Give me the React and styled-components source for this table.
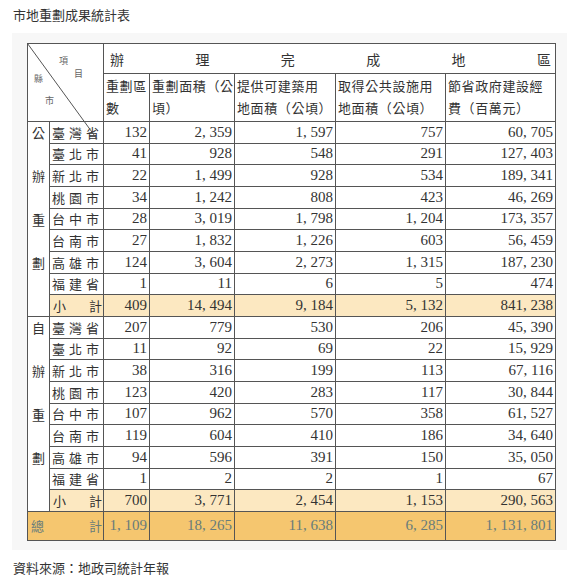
import React from 'react'
import styled, { createGlobalStyle } from 'styled-components'

const GlobalStyle = createGlobalStyle`
  body {
    margin: 0;
    background: #fff;
    font-family: "Noto Sans CJK TC", "Noto Sans", sans-serif;
    color: #333;
  }
`

const sections = [
    {
        label: ['公', '辦', '重', '劃'],
        rows: [
            ['臺灣省', 132, 2359, 1597, 757, 60705],
            ['臺北市', 41, 928, 548, 291, 127403],
            ['新北市', 22, 1499, 928, 534, 189341],
            ['桃園市', 34, 1242, 808, 423, 46269],
            ['台中市', 28, 3019, 1798, 1204, 173357],
            ['台南市', 27, 1832, 1226, 603, 56459],
            ['高雄市', 124, 3604, 2273, 1315, 187230],
            ['福建省', 1, 11, 6, 5, 474],
        ],
        subtotal: [409, 14494, 9184, 5132, 841238],
    },
    {
        label: ['自', '辦', '重', '劃'],
        rows: [
            ['臺灣省', 207, 779, 530, 206, 45390],
            ['臺北市', 11, 92, 69, 22, 15929],
            ['新北市', 38, 316, 199, 113, 67116],
            ['桃園市', 123, 420, 283, 117, 30844],
            ['台中市', 107, 962, 570, 358, 61527],
            ['台南市', 119, 604, 410, 186, 34640],
            ['高雄市', 94, 596, 391, 150, 35050],
            ['福建省', 1, 2, 2, 1, 67],
        ],
        subtotal: [700, 3771, 2454, 1153, 290563],
    },
]

const total = [1109, 18265, 11638, 6285, 1131801]

// 原表的千分位是「逗號 + 空白」
const fmt = (n) => n.toLocaleString('en-US').replace(/,/g, ', ')

const colWidths = [22, 54, 46, 85, 101, 110, 110]

function App() {
    return (
        <>
            <GlobalStyle />
            <Page>
                <Title>市地重劃成果統計表</Title>
                <Panel>
                    <TableWrap>
                        <Table>
                            <colgroup>
                                {colWidths.map((w, i) => <col key={i} style={{ width: w }} />)}
                            </colgroup>
                            <thead>
                                <tr>
                                    <Corner colSpan={2} rowSpan={2}>
                                        <CornerLabel $x={31} $y={12}>項</CornerLabel>
                                        <CornerLabel $x={46} $y={25}>目</CornerLabel>
                                        <CornerLabel $x={6} $y={30}>縣</CornerLabel>
                                        <CornerLabel $x={17} $y={52}>市</CornerLabel>
                                    </Corner>
                                    <SpreadHead colSpan={5}>
                                        <Spread>
                                            {'辦理完成地區'.split('').map((c) => <span key={c}>{c}</span>)}
                                        </Spread>
                                    </SpreadHead>
                                </tr>
                                <tr>
                                    <SubHead>重劃區<br />數</SubHead>
                                    <SubHead>重劃面積（公<br />頃）</SubHead>
                                    <SubHead>提供可建築用<br />地面積（公頃）</SubHead>
                                    <SubHead>取得公共設施用<br />地面積（公頃）</SubHead>
                                    <SubHead>節省政府建設經<br />費（百萬元）</SubHead>
                                </tr>
                            </thead>
                            <tbody>
                                {sections.map((s, si) => (
                                    <React.Fragment key={si}>
                                        {s.rows.map((r, ri) => (
                                            <Row key={ri}>
                                                {ri === 0 && (
                                                    <Group rowSpan={9}>
                                                        <GroupChars>
                                                            {s.label.map((c, ci) => <span key={ci}>{c}</span>)}
                                                        </GroupChars>
                                                    </Group>
                                                )}
                                                <City>{r[0]}</City>
                                                {r.slice(1).map((v, vi) => <Num key={vi}>{fmt(v)}</Num>)}
                                            </Row>
                                        ))}
                                        <Row $tone="sub">
                                            <City>
                                                <Spread><span>小</span><span>計</span></Spread>
                                            </City>
                                            {s.subtotal.map((v, vi) => <Num key={vi}>{fmt(v)}</Num>)}
                                        </Row>
                                    </React.Fragment>
                                ))}
                                <Row $tone="total" $tall>
                                    <City colSpan={2}>
                                        <Spread><span>總</span><span>計</span></Spread>
                                    </City>
                                    {total.map((v, vi) => <Num key={vi}>{fmt(v)}</Num>)}
                                </Row>
                            </tbody>
                        </Table>
                        <Diagonal width="72" height="98" viewBox="0 0 72 98">
                            <line x1="0.5" y1="0.5" x2="70" y2="96" stroke="#555" strokeWidth="1" />
                        </Diagonal>
                    </TableWrap>
                </Panel>
                <Source>資料來源：地政司統計年報</Source>
            </Page>
        </>
    )
}

const Page = styled.div`
  padding: 6px 19px 0 12px;
`

const Title = styled.div`
  font-size: 13px;
  line-height: 18px;
  padding-left: 1px;
  color: #333;
`

const Panel = styled.div`
  margin-top: 9px;
  background: #f7f7f7;
  padding: 10px 12px 9px 15px;
`

const Source = styled.div`
  margin-top: 9px;
  font-size: 13px;
  line-height: 18px;
  padding-left: 1px;
  color: #333;
`

const TableWrap = styled.div`
  position: relative;
  width: 528px;
`

const Table = styled.table`
  width: 528px;
  table-layout: fixed;
  border-collapse: collapse;
  background: #fff;
  border: 1px solid #444;
  font-family: "Liberation Serif", "Noto Sans CJK TC", serif;
  color: #333;

  td, th {
    border: 1px solid #555;
    padding: 0;
    font-weight: normal;
  }
`

const Corner = styled.th`
  position: relative;
  height: 30px;
  vertical-align: top;
`

const CornerLabel = styled.span`
  position: absolute;
  left: ${(p) => p.$x}px;
  top: ${(p) => p.$y}px;
  font-size: 9px;
  line-height: 10px;
  color: #666;
  font-family: "Noto Sans CJK TC", sans-serif;
`

const SpreadHead = styled.th`
  height: 29px;
  padding: 0 2px 0 3px !important;
  font-size: 14px;
`

const Spread = styled.div`
  display: flex;
  justify-content: space-between;
  padding: 0 2px 0 3px;
`

const SubHead = styled.th`
  height: 47px;
  text-align: left;
  vertical-align: middle;
  font-size: 13px;
  line-height: 22px;
  letter-spacing: 0.6px;
  white-space: nowrap;
  overflow: hidden;
  padding-left: 2px !important;
`

const Row = styled.tr`
  height: ${(p) => (p.$tall ? '29px' : '21.67px')};
  background: ${(p) => (p.$tone === 'sub' ? '#fce8c1' : p.$tone === 'total' ? '#f5c66f' : '#fff')};
  color: ${(p) => (p.$tone === 'total' ? '#687c7b' : '#333')};
`

const Group = styled.td`
  background: #fff;
  vertical-align: top;
`

const GroupChars = styled.div`
  display: flex;
  flex-direction: column;
  align-items: center;
  gap: 21.67px;
  font-size: 13px;
  line-height: 21.67px;
  font-family: "Noto Sans CJK TC", sans-serif;
  color: #333;
`

const City = styled.td`
  font-size: 13px;
  letter-spacing: 4px;
  padding-left: 2px !important;
  white-space: nowrap;
  font-family: "Noto Sans CJK TC", sans-serif;

  ${Spread} {
    letter-spacing: 0;
    padding: 0 1px 0 1px;
  }
`

const Num = styled.td`
  text-align: right;
  font-size: 15px;
  padding-right: 2px !important;
  white-space: nowrap;
`

const Diagonal = styled.svg`
  position: absolute;
  left: 0;
  top: 0;
  pointer-events: none;
`

export default App
